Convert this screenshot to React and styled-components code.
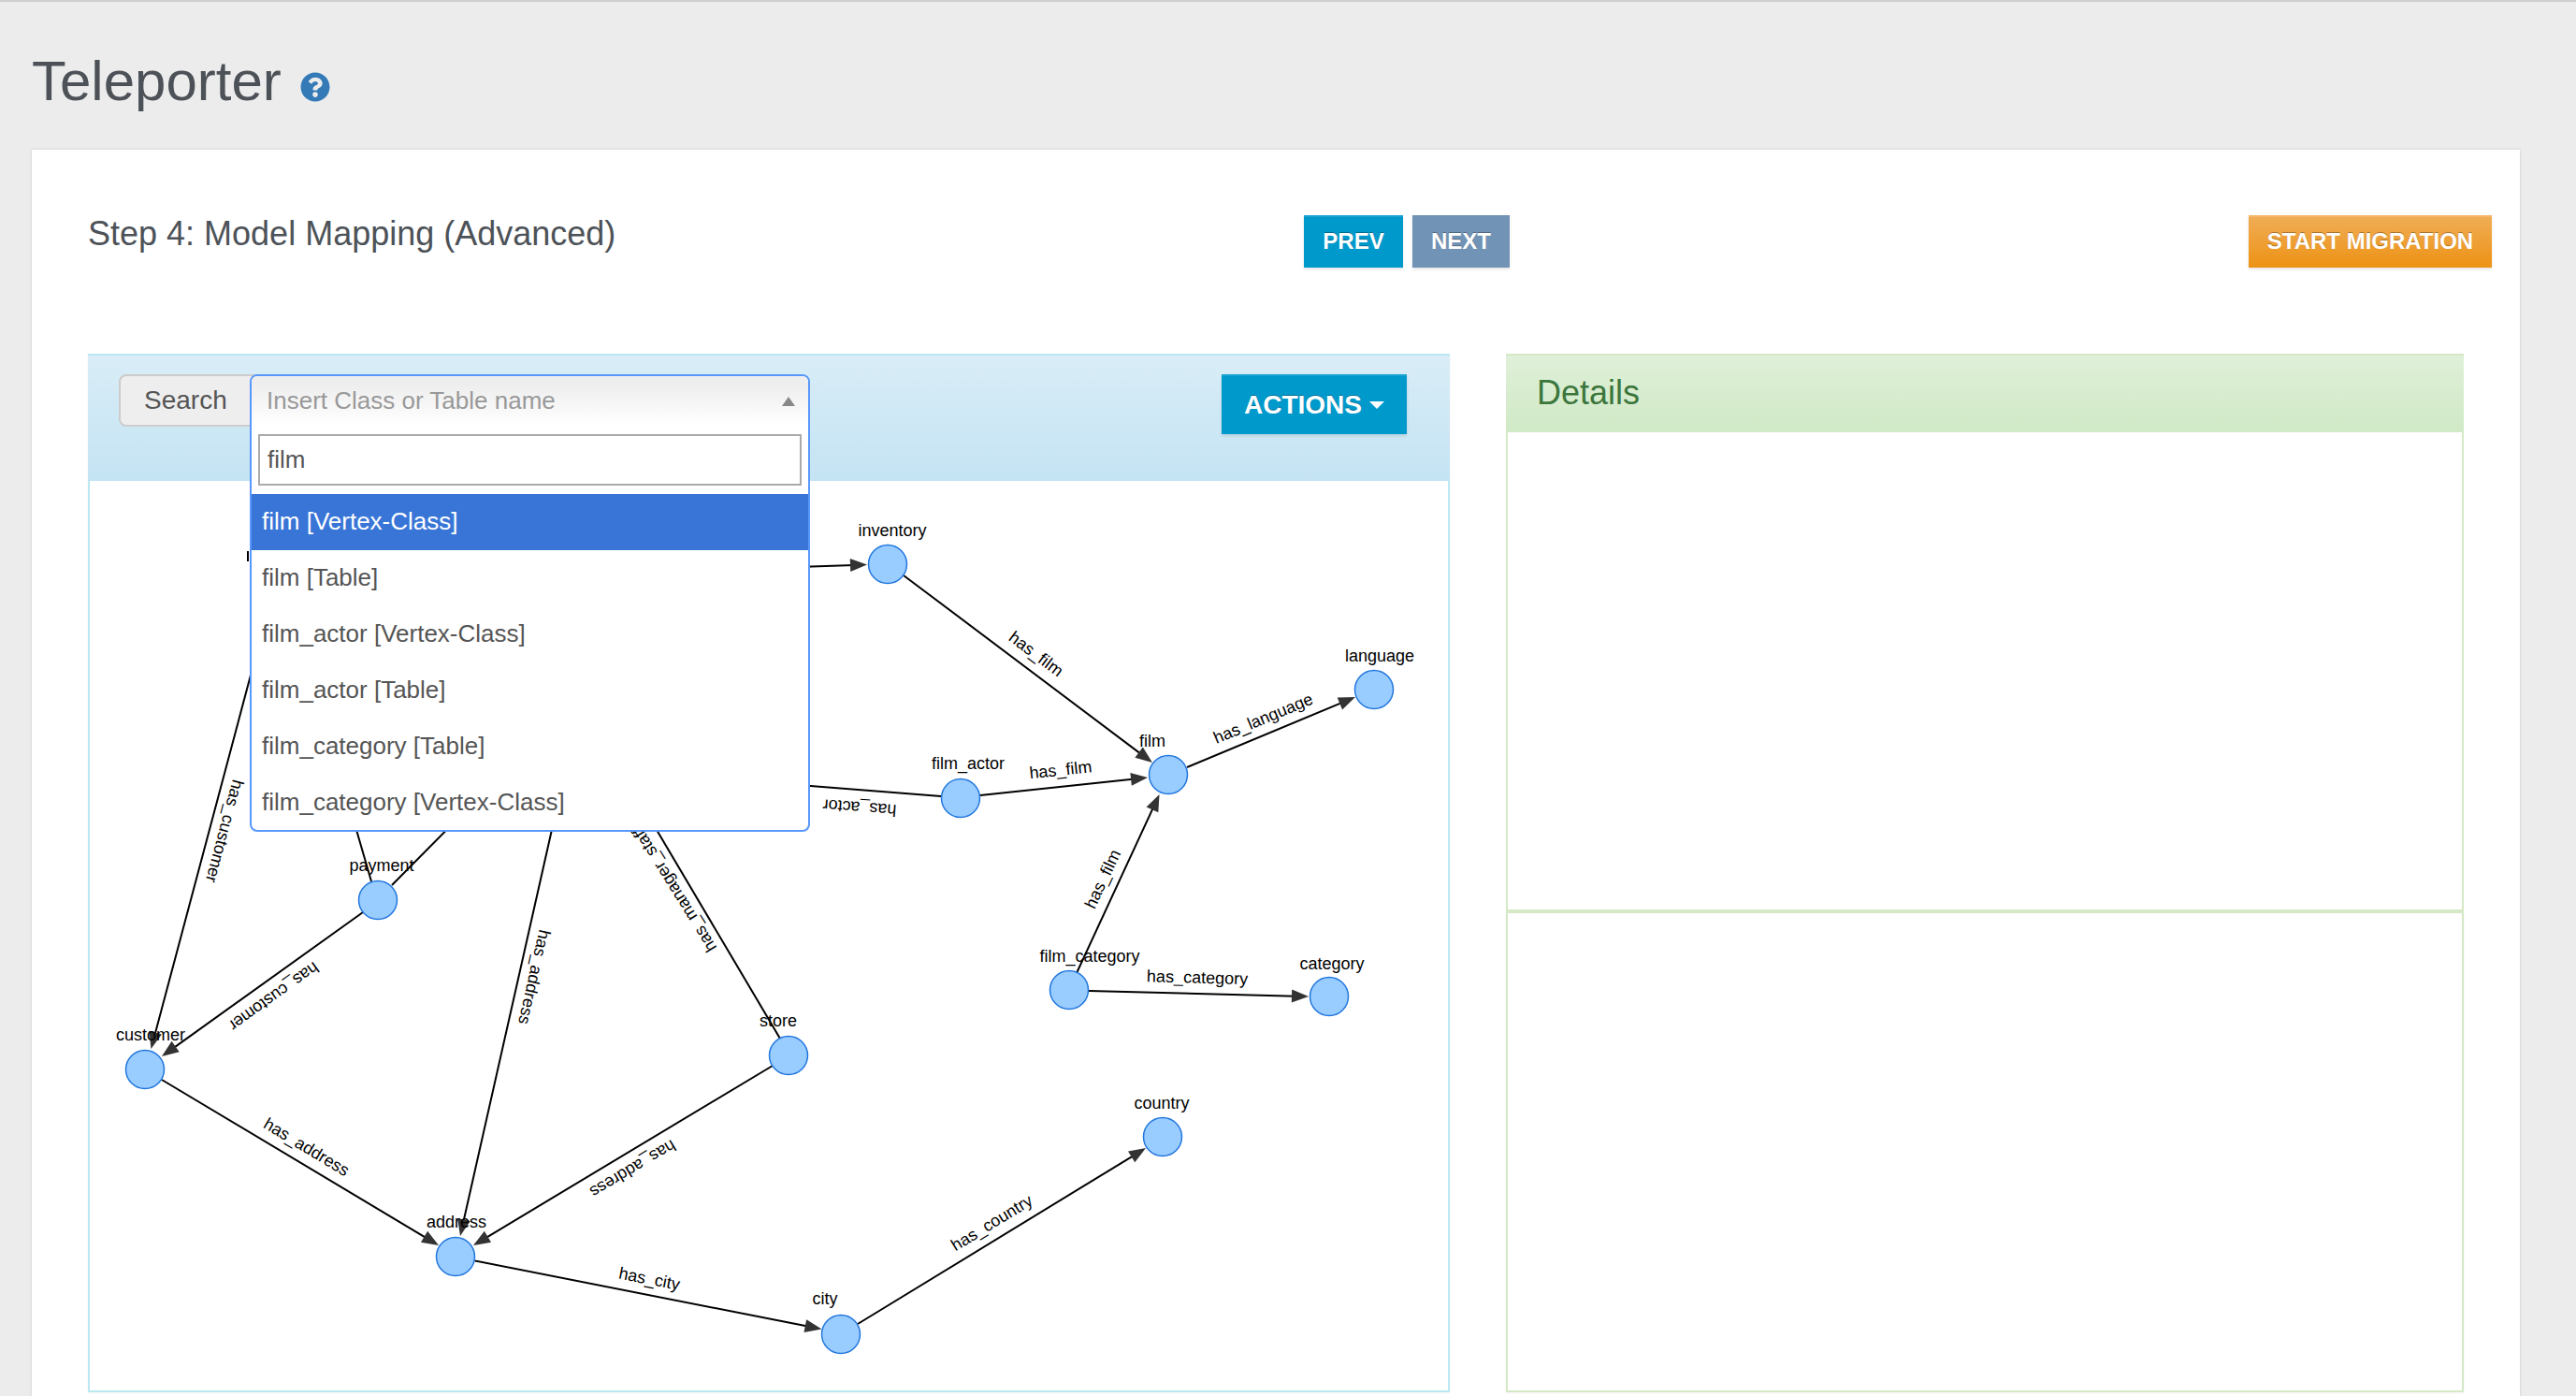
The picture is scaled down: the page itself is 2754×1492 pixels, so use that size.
import React from "react";
import styled, { createGlobalStyle } from "styled-components";
import { FaQuestionCircle } from "react-icons/fa";

const nodes = [
  { name: "inventory", x: 949, y: 604, lx: 954, ly: 574 },
  { name: "film", x: 1249, y: 829, lx: 1232, ly: 799 },
  { name: "language", x: 1469, y: 738, lx: 1475, ly: 708 },
  { name: "film_actor", x: 1027, y: 854, lx: 1035, ly: 823 },
  { name: "film_category", x: 1143, y: 1059, lx: 1165, ly: 1029 },
  { name: "category", x: 1421, y: 1066, lx: 1424, ly: 1037 },
  { name: "customer", x: 155, y: 1144, lx: 161, ly: 1113 },
  { name: "payment", x: 404, y: 963, lx: 408, ly: 932 },
  { name: "store", x: 843, y: 1129, lx: 832, ly: 1098 },
  { name: "address", x: 487, y: 1344, lx: 488, ly: 1313 },
  { name: "city", x: 899, y: 1427, lx: 882, ly: 1395 },
  { name: "country", x: 1243, y: 1216, lx: 1242, ly: 1186 },
];

// x1,y1 -> x2,y2, arrow marks a head at the far end
const edges = [
  { x1: 700, y1: 612, x2: 927, y2: 604.5, arrow: true },
  { x1: 966, y1: 616, x2: 1232, y2: 816, arrow: true },
  { x1: 1048, y1: 851, x2: 1227, y2: 832, arrow: true },
  { x1: 1151, y1: 1041, x2: 1239.5, y2: 850, arrow: true },
  { x1: 1269, y1: 821, x2: 1449, y2: 746, arrow: true },
  { x1: 1164, y1: 1060, x2: 1399, y2: 1066, arrow: true },
  { x1: 1006, y1: 852, x2: 700, y2: 828 },
  { x1: 290, y1: 640, x2: 161.5, y2: 1122, arrow: true },
  { x1: 388, y1: 976, x2: 173, y2: 1130, arrow: true },
  { x1: 370, y1: 850, x2: 397, y2: 943 },
  { x1: 515, y1: 850, x2: 419, y2: 947 },
  { x1: 603, y1: 830, x2: 492, y2: 1322, arrow: true },
  { x1: 660, y1: 817, x2: 834, y2: 1111 },
  { x1: 826, y1: 1140, x2: 506, y2: 1332, arrow: true },
  { x1: 173, y1: 1155, x2: 469, y2: 1332, arrow: true },
  { x1: 507.5, y1: 1348.5, x2: 878.5, y2: 1421.5, arrow: true },
  { x1: 917, y1: 1416, x2: 1225, y2: 1228, arrow: true },
  { x1: 265, y1: 590, x2: 265, y2: 601 },
];

const edgeLabels = [
  { text: "has_film", x: 1107, y: 701, angle: 37 },
  { text: "has_film", x: 1134, y: 825, angle: -6 },
  { text: "has_film", x: 1180, y: 941, angle: -65 },
  { text: "has_language", x: 1351, y: 770, angle: -22.6 },
  { text: "has_category", x: 1280, y: 1047, angle: 1.5 },
  { text: "has_actor", x: 919, y: 863, angle: 184.5 },
  { text: "has_customer", x: 239, y: 889, angle: 105 },
  { text: "has_customer", x: 292, y: 1065, angle: 144.4 },
  { text: "has_address", x: 570, y: 1045, angle: 102.7 },
  { text: "has_manager_staff", x: 722, y: 951, angle: 238 },
  { text: "has_address", x: 327, y: 1228, angle: 31 },
  { text: "has_address", x: 676, y: 1249, angle: 149 },
  { text: "has_city", x: 694, y: 1369, angle: 11 },
  { text: "has_country", x: 1061, y: 1309, angle: -31.4 },
];

const options = [
  "film [Vertex-Class]",
  "film [Table]",
  "film_actor [Vertex-Class]",
  "film_actor [Table]",
  "film_category [Table]",
  "film_category [Vertex-Class]",
];

const HEAD = 18;

function Edge({ x1, y1, x2, y2, arrow }) {
  const angle = Math.atan2(y2 - y1, x2 - x1);
  const back = arrow ? HEAD - 4 : 0;
  return (
    <g>
      <line
        x1={x1}
        y1={y1}
        x2={x2 - Math.cos(angle) * back}
        y2={y2 - Math.sin(angle) * back}
        stroke="#000"
        strokeWidth="2"
      />
      {arrow && (
        <polygon
          points={`0,0 ${-HEAD},-7 ${-HEAD},7`}
          fill="#333"
          transform={`translate(${x2} ${y2}) rotate(${(angle * 180) / Math.PI})`}
        />
      )}
    </g>
  );
}

function App() {
  return (
    <Page>
      <GlobalStyle />
      <Header>
        <Title>Teleporter</Title>
        <HelpIcon />
      </Header>
      <Card>
        <StepRow>
          <StepTitle>Step 4: Model Mapping (Advanced)</StepTitle>
          <Button $width={106} $bg="#0099cc" $top="#19a3d1">PREV</Button>
          <Button $width={104} $bg="#7193b5" $top="#7193b5">NEXT</Button>
          <StartButton $width={260}>START MIGRATION</StartButton>
        </StepRow>
        <Panels>
          <GraphPanel>
            <GraphHeading>
              <SearchGroup>
                <SearchAddon>Search</SearchAddon>
                <SelectWrap>
                  <SelectBox>
                    <SelectHead>
                      <Placeholder>Insert Class or Table name</Placeholder>
                      <SelectArrow />
                    </SelectHead>
                    <SearchInput>film</SearchInput>
                    <OptionList>
                      {options.map((option, index) => (
                        <Option key={option} $active={index === 0}>
                          {option}
                        </Option>
                      ))}
                    </OptionList>
                  </SelectBox>
                </SelectWrap>
              </SearchGroup>
              <ActionsButton>
                ACTIONS
                <Caret />
              </ActionsButton>
            </GraphHeading>
            <Graph viewBox="96 516 1452 970">
              {edges.map((edge, index) => (
                <Edge key={index} {...edge} />
              ))}
              {edgeLabels.map((label, index) => (
                <EdgeText
                  key={index}
                  textAnchor="middle"
                  dominantBaseline="middle"
                  transform={`translate(${label.x} ${label.y}) rotate(${label.angle})`}
                >
                  {label.text}
                </EdgeText>
              ))}
              {nodes.map((node) => (
                <g key={node.name}>
                  <circle cx={node.x} cy={node.y} r="20.5" fill="#99ccff" stroke="#2277dd" strokeWidth="1.5" />
                  <EdgeText x={node.lx} y={node.ly} textAnchor="middle">
                    {node.name}
                  </EdgeText>
                </g>
              ))}
            </Graph>
          </GraphPanel>
          <DetailsColumn>
            <DetailsPanel>
              <DetailsHeading>Details</DetailsHeading>
            </DetailsPanel>
            <EmptyPanel />
          </DetailsColumn>
        </Panels>
      </Card>
    </Page>
  );
}

export default App;

const GlobalStyle = createGlobalStyle`
  html, body {
    margin: 0;
    height: 1492px;
    overflow: hidden;
    background: #ececec;
    font-family: "Liberation Sans", Arial, sans-serif;
  }
`;

const Page = styled.div`
  height: 1492px;
  box-sizing: border-box;
  border-top: 2px solid #cfcfcf;
  display: flex;
  flex-direction: column;
  color: #4d5258;
`;

const Header = styled.div`
  display: flex;
  align-items: center;
  gap: 20px;
  padding: 55px 0 43px 34px;
`;

const Title = styled.h1`
  margin: 0;
  font-size: 60px;
  line-height: 60px;
  font-weight: 400;
  color: #4d5258;
`;

const HelpIcon = styled(FaQuestionCircle)`
  width: 32px;
  height: 32px;
  margin-top: 11px;
  color: #337ab7;
`;

const Card = styled.div`
  flex: 1;
  margin: 0 60px 0 34px;
  background: #fff;
  box-shadow: 0 0 3px rgba(0, 0, 0, 0.15);
  display: flex;
  flex-direction: column;
`;

const StepRow = styled.div`
  display: flex;
  align-items: flex-start;
  gap: 10px;
  padding: 70px 30px 0 60px;
`;

const StepTitle = styled.h3`
  width: 1290px;
  margin: 0;
  font-size: 36px;
  line-height: 40px;
  font-weight: 400;
  color: #4d5258;
`;

const Button = styled.button`
  width: ${(props) => props.$width}px;
  height: 56px;
  padding: 0 0 3px;
  border: 0;
  border-top: 2px solid ${(props) => props.$top};
  background: ${(props) => props.$bg};
  box-shadow: 0 2px 3px rgba(0, 0, 0, 0.1);
  color: #fff;
  font-family: inherit;
  font-size: 24px;
  font-weight: 700;
  text-shadow: 0 -1px 0 rgba(0, 0, 0, 0.3);
`;

const StartButton = styled(Button)`
  margin-left: auto;
  border-top-color: #f3b767;
  background: linear-gradient(#f0ad55, #ed9214);
`;

const Panels = styled.div`
  display: flex;
  gap: 60px;
  padding: 92px 0 4px 60px;
  flex: 1;
  min-height: 0;
`;

const GraphPanel = styled.div`
  width: 1456px;
  box-sizing: border-box;
  border: 2px solid #bce8f1;
  box-shadow: 0 1px 2px rgba(0, 0, 0, 0.05);
  display: flex;
  flex-direction: column;
`;

const GraphHeading = styled.div`
  height: 136px;
  flex: none;
  box-sizing: border-box;
  margin: -2px -2px 0;
  border-top: 2px solid #bce8f1;
  padding: 20px 46px 0 33px;
  display: flex;
  align-items: flex-start;
  justify-content: space-between;
  background: linear-gradient(#d9edf7, #c4e3f3);
`;

const SearchGroup = styled.div`
  display: flex;
`;

const SearchAddon = styled.div`
  width: 146px;
  height: 56px;
  box-sizing: border-box;
  padding-left: 25px;
  margin-right: -6px;
  border: 2px solid #ccc;
  border-radius: 8px 0 0 8px;
  background: #eee;
  font-size: 28px;
  line-height: 52px;
  color: #555;
`;

const SelectWrap = styled.div`
  position: relative;
  width: 599px;
  height: 56px;
`;

const SelectBox = styled.div`
  position: absolute;
  top: 0;
  left: 0;
  right: 0;
  box-sizing: border-box;
  height: 489px;
  border: 2px solid #5897fb;
  border-radius: 8px;
  background: #fff;
  overflow: hidden;
  z-index: 2;
`;

const SelectHead = styled.div`
  height: 62px;
  box-sizing: border-box;
  padding: 0 14px 9px 16px;
  display: flex;
  align-items: center;
  justify-content: space-between;
  background: linear-gradient(#eeeeee 15%, #ffffff 85%);
`;

const Placeholder = styled.span`
  font-size: 26px;
  color: #999;
`;

const SelectArrow = styled.span`
  width: 0;
  height: 0;
  border-left: 7px solid transparent;
  border-right: 7px solid transparent;
  border-bottom: 10px solid #888;
`;

const SearchInput = styled.div`
  height: 55px;
  box-sizing: border-box;
  margin: 0 7px;
  padding-left: 8px;
  border: 2px solid #aaa;
  background: #fff;
  font-size: 26px;
  line-height: 51px;
  color: #555;
`;

const OptionList = styled.div`
  margin-top: 9px;
`;

const Option = styled.div`
  height: 60px;
  padding-left: 11px;
  font-size: 26px;
  line-height: 58px;
  color: ${(props) => (props.$active ? "#fff" : "#555")};
  background: ${(props) => (props.$active ? "#3875d7" : "transparent")};
`;

const ActionsButton = styled.button`
  width: 198px;
  height: 64px;
  flex: none;
  border: 0;
  border-top: 2px solid #19a3d1;
  background: #0099cc;
  box-shadow: 0 2px 3px rgba(0, 0, 0, 0.1);
  color: #fff;
  font-family: inherit;
  font-size: 28px;
  font-weight: 700;
  text-shadow: 0 -1px 0 rgba(0, 0, 0, 0.25);
  display: flex;
  align-items: center;
  justify-content: center;
  gap: 8px;
`;

const Caret = styled.span`
  width: 0;
  height: 0;
  border-left: 8px solid transparent;
  border-right: 8px solid transparent;
  border-top: 8px solid #fff;
`;

const Graph = styled.svg`
  display: block;
  width: 100%;
  flex: 1;
  min-height: 0;
`;

const EdgeText = styled.text`
  font-family: "Liberation Sans", Arial, sans-serif;
  font-size: 18px;
  fill: #000;
`;

const DetailsColumn = styled.div`
  width: 1024px;
  display: flex;
  flex-direction: column;
`;

const DetailsPanel = styled.div`
  height: 596px;
  box-sizing: border-box;
  border: 2px solid #d6e9c6;
`;

const DetailsHeading = styled.div`
  height: 84px;
  box-sizing: border-box;
  margin: -2px -2px 0;
  border-top: 2px solid #d6e9c6;
  padding: 0 0 0 33px;
  background: linear-gradient(#dff0d8, #d0e9c6);
  color: #3c763d;
  font-size: 36px;
  line-height: 80px;
`;

const EmptyPanel = styled.div`
  flex: 1;
  border: 2px solid #d6e9c6;
  box-shadow: 0 1px 2px rgba(0, 0, 0, 0.05);
`;
